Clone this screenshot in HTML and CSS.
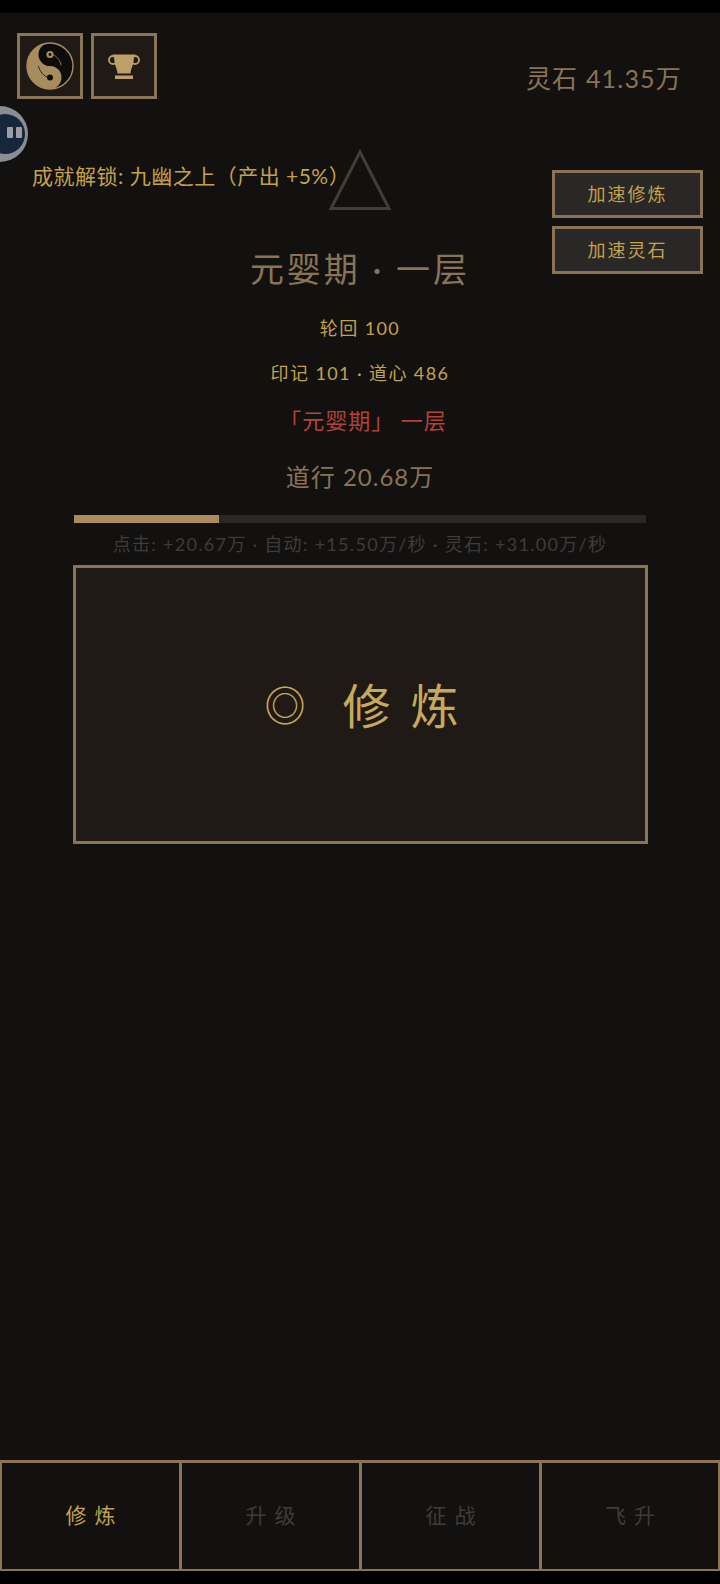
FILE: index.html
```html
<!DOCTYPE html>
<html lang="zh">
<head>
<meta charset="utf-8">
<title>修炼</title>
<link rel="stylesheet" href="styles.css">
</head>
<body>
<div class="app">
  <header class="top">
    <div class="icons">
      <button class="icon-btn">
        <svg viewBox="0 0 48 48" width="48" height="48">
          <circle cx="24" cy="24" r="23" fill="#0d0c0b" stroke="#a98c5e" stroke-width="1.4"/>
          <path d="M24 1A23 23 0 0 0 24 47A11.500 11.500 0 0 0 24 24A11.500 11.500 0 0 1 24 1z" fill="#a98c5e"/>
          <circle cx="24" cy="12.500" r="3.600" fill="#a98c5e"/>
          <circle cx="24" cy="12.500" r="1.400" fill="#0d0c0b"/>
          <circle cx="24" cy="35.500" r="3" fill="#0d0c0b"/>
          <path d="M12.500 24c1 5 5 10 9 11" fill="none" stroke="#0d0c0b" stroke-width=".8"/>
          <path d="M27 12.500c4 2 8 7 8 11" fill="none" stroke="#a98c5e" stroke-width=".8"/>
        </svg>
      </button>
      <button class="icon-btn">
        <svg viewBox="0 0 32 25" width="32" height="25">
          <circle cx="5" cy="6" r="4" fill="none" stroke="#bda067" stroke-width="1.800"/>
          <circle cx="27" cy="6" r="4" fill="none" stroke="#bda067" stroke-width="1.800"/>
          <path d="M4.500 0.500H27.500L26 3L25.500 8C25 12 23 14 22.500 19.500H9.500C9 14 7 12 6.500 8L6 3z" fill="#bda067"/>
          <rect x="7" y="21.500" width="18" height="3.500" fill="#bda067"/>
        </svg>
      </button>
    </div>
    <div class="stones">灵石 41.35万</div>
  </header>

  <div class="assist" aria-hidden="true"><span class="assist-core"><i></i><i></i></span></div>
  <p class="toast">成就解锁: 九幽之上（产出 +5%）</p>
  <svg class="realm-mark" viewBox="0 0 64 62" width="64" height="62"><path d="M32 3L61 59.500H3z" fill="none" stroke="#3f3e3c" stroke-width="3"/></svg>
  <div class="boosts">
    <button class="boost">加速修炼</button>
    <button class="boost">加速灵石</button>
  </div>

  <main class="stage">
    <h1 class="realm">元婴期 · 一层</h1>
    <p class="line gold">轮回 100</p>
    <p class="line gold">印记 101 · 道心 486</p>
    <p class="tier">「元婴期」 一层</p>
    <p class="dao">道行 20.68万</p>
    <div class="progress"><div class="progress-fill" style="width:25.4%"></div></div>
    <p class="rates">点击: +20.67万 · 自动: +15.50万/秒 · 灵石: +31.00万/秒</p>
    <button class="cultivate"><span class="ring">◎</span><span class="cultivate-label">修炼</span></button>
  </main>

  <nav class="tabs">
    <button class="tab active">修炼</button>
    <button class="tab">升级</button>
    <button class="tab">征战</button>
    <button class="tab">飞升</button>
  </nav>
</div>
</body>
</html>
```

FILE: styles.css
```css
* { box-sizing: border-box; }
html, body { margin: 0; height: 100%; background: #000; }
body { font-family: Lato, "Noto Sans CJK SC", sans-serif; }
button { font: inherit; cursor: pointer; padding: 0; }
p, h1 { margin: 0; }

.app {
  position: relative;
  width: 720px;
  height: 1558px;
  margin-top: 13px;
  background: #121110;
  display: flex;
  flex-direction: column;
  overflow: hidden;
}

.top {
  display: flex;
  justify-content: space-between;
  align-items: flex-start;
  padding: 20px 38px 0 17px;
}
.icons { display: flex; gap: 8px; }
.icon-btn {
  width: 66px;
  height: 66px;
  border: 3px solid #8b7355;
  background: #1f1a16;
  display: flex;
  align-items: center;
  justify-content: center;
}
.stones {
  margin-top: 27px;
  font-size: 25px;
  line-height: 36px;
  letter-spacing: 1.2px;
  color: #8b7355;
}

.assist {
  position: absolute;
  left: -28px;
  top: 93px;
  width: 56px;
  height: 56px;
  border-radius: 50%;
  background: #8a8d92;
  display: flex;
  align-items: center;
  justify-content: center;
}
.assist-core {
  width: 40px;
  height: 40px;
  margin-left: 9px;
  border-radius: 50%;
  background: #18263b;
  display: flex;
  justify-content: flex-end;
  align-items: center;
  gap: 3px;
  padding: 0 3px 3px 0;
}
.assist-core i { width: 6px; height: 11px; background: #9a9da2; border-radius: 1px; }

.toast {
  position: absolute;
  left: 32px;
  top: 148px;
  font-size: 21px;
  line-height: 30px;
  letter-spacing: .5px;
  color: #c4a24c;
  white-space: nowrap;
}
.realm-mark { position: absolute; left: 328px; top: 136px; }

.boosts {
  position: absolute;
  left: 552px;
  top: 157px;
  display: flex;
  flex-direction: column;
  gap: 8px;
}
.boost {
  width: 151px;
  height: 48px;
  border: 3px solid #8b7355;
  background: #2a2826;
  color: #c4a24c;
  font-size: 18px;
  letter-spacing: 2px;
  padding-bottom: 3px;
}

.stage {
  flex: 1;
  display: flex;
  flex-direction: column;
  align-items: center;
  padding-top: 147px;
}
.realm {
  font-size: 34px;
  font-weight: 400;
  line-height: 46px;
  letter-spacing: 3px;
  color: #8b7355;
  margin-bottom: 5px;
}
.line {
  font-size: 18px;
  line-height: 26px;
  letter-spacing: 1.4px;
  color: #c4a24c;
  margin-top: 18px;
}
.line + .line { margin-top: 19px; }
.tier {
  font-size: 22px;
  line-height: 30px;
  letter-spacing: 1px;
  color: #b5413a;
  margin-top: 20px;
  padding-left: 6px;
}
.dao {
  font-size: 24px;
  line-height: 34px;
  letter-spacing: 1px;
  color: #8b7355;
  margin-top: 24px;
}
.progress {
  width: 572px;
  height: 8px;
  margin-top: 21px;
  background: #2a2826;
}
.progress-fill { height: 100%; background: #a98c5e; }
.rates {
  font-size: 18px;
  line-height: 26px;
  letter-spacing: 1.3px;
  color: #3f3c38;
  margin-top: 8px;
  white-space: nowrap;
}
.cultivate {
  width: 575px;
  height: 279px;
  margin-top: 8px;
  border: 3px solid #8b7355;
  background: #1f1a16;
  color: #c9a85c;
  font-size: 48px;
  display: flex;
  align-items: center;
  justify-content: center;
  padding: 0 0 4px 3px;
}
.ring { margin-right: 37px; font-size: 41px; }
.cultivate-label { letter-spacing: 20px; margin-right: -20px; }

.tabs {
  display: grid;
  grid-template-columns: 182px 180px 180px 178px;
  height: 111px;
  border-top: 3px solid #8b7355;
  border-bottom: 2px solid #8b7355;
}
.tab {
  background: #121110;
  border: 0;
  border-right: 3px solid #8b7355;
  color: #3f3c38;
  font-size: 21px;
  letter-spacing: 8px;
  padding: 0 0 4px 8px;
}
.tab:last-child { border-right: 2px solid #8b7355; }
.tab:first-child { border-left: 2px solid #8b7355; }
.tab.active { color: #c4a24c; }
```
